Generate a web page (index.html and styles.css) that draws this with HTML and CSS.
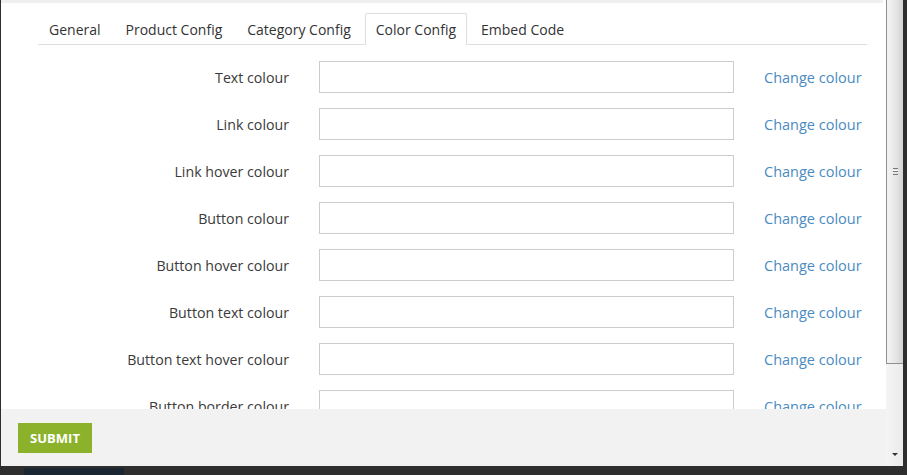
FILE: index.html
```html
<!DOCTYPE html>
<html>
<head>
<meta charset="utf-8">
<link rel="stylesheet" href="styles.css">
</head>
<body>
<div class="frame">
  <div class="modal">
    <div class="main">
      <div class="scroll">
        <div class="topstrip"></div>
        <div class="tabs">
          <div class="tab">General</div>
          <div class="tab">Product Config</div>
          <div class="tab">Category Config</div>
          <div class="tab active">Color Config</div>
          <div class="tab">Embed Code</div>
        </div>
        <div class="form">
          <label class="lbl">Text colour</label><div class="inp"></div><a class="chg">Change colour</a>
          <label class="lbl">Link colour</label><div class="inp"></div><a class="chg">Change colour</a>
          <label class="lbl">Link hover colour</label><div class="inp"></div><a class="chg">Change colour</a>
          <label class="lbl">Button colour</label><div class="inp"></div><a class="chg">Change colour</a>
          <label class="lbl">Button hover colour</label><div class="inp"></div><a class="chg">Change colour</a>
          <label class="lbl">Button text colour</label><div class="inp"></div><a class="chg">Change colour</a>
          <label class="lbl">Button text hover colour</label><div class="inp"></div><a class="chg">Change colour</a>
          <label class="lbl">Button border colour</label><div class="inp"></div><a class="chg">Change colour</a>
        </div>
      </div>
      <div class="footer">
        <button class="submit">SUBMIT</button>
      </div>
    </div>
    <div class="sbar">
      <div class="thumb"><div class="grip"></div></div>
      <div class="track"><div class="arrow"></div></div>
    </div>
  </div>
  <div class="under"><div class="navy"></div></div>
</div>
</body>
</html>
```
FILE: styles.css
```css
html, body {
  margin: 0;
  padding: 0;
  background: #2e2e2e;
  font-family: "Open Sans", "Noto Sans", sans-serif;
  font-size: 14.2px;
  color: #333;
}
.frame {
  width: 907px;
  height: 475px;
  overflow: hidden;
}
.modal {
  display: flex;
  width: 902px;
  height: 466px;
  margin-left: 1px;
  background: #fff;
}
.main {
  width: 885px;
  display: flex;
  flex-direction: column;
}
.scroll {
  height: 409px;
  overflow: hidden;
  background: #fff;
}
.topstrip {
  height: 3px;
  background: #efefef;
  margin-right: 3px;
}
.tabs {
  display: flex;
  margin: 10px 19px 0 37px;
  border-bottom: 1px solid #dedede;
  font-size: 14px;
}
.tab {
  padding: 6px 10px 4px;
  margin-right: 3px;
  border: 1px solid transparent;
  border-bottom: none;
  line-height: 20px;
  color: #333;
  border-radius: 2px 2px 0 0;
}
.active {
  border-color: #dedede;
  background: #fff;
  margin-bottom: -1px;
  padding-bottom: 5px;
}
.form {
  display: grid;
  grid-template-columns: 251px 415px auto;
  column-gap: 30px;
  row-gap: 15px;
  margin: 16px 0 0 37px;
  align-items: center;
}
.lbl {
  text-align: right;
  color: #3a3a3a;
}
.inp {
  height: 30px;
  border: 1px solid #cccccc;
  background: #fff;
}
.chg {
  color: #4a8bc2;
  font-size: 14.5px;
}
.footer {
  height: 57px;
  background: #f2f2f2;
  padding: 14px 0 0 17px;
  box-sizing: border-box;
}
.submit {
  height: 30px;
  width: 74px;
  border: none;
  background: #8cb22b;
  color: #fff;
  font-family: "Open Sans", "Noto Sans", sans-serif;
  font-weight: 700;
  font-size: 13px;
  padding: 0;
  border-radius: 0;
}
.sbar {
  width: 17px;
  display: flex;
  flex-direction: column;
  background: #f0f0f0;
}
.thumb {
  height: 364px;
  box-sizing: border-box;
  border-left: 1px solid #8f8f8f;
  border-bottom: 1px solid #8f8f8f;
  background: linear-gradient(to right, #f4f4f4, #e4e4e4 60%, #d2d2d2);
  display: flex;
  align-items: center;
  justify-content: center;
  padding-bottom: 20px;
}
.grip {
  width: 5px;
  height: 5px;
  border-top: 1px solid #777;
  border-bottom: 1px solid #777;
  background: linear-gradient(#fff 0 1px, #777 1px 2px, transparent 2px);
  background-position: 0 1px;
  background-size: 5px 3px;
  background-repeat: no-repeat;
}
.track {
  flex: 1;
  display: flex;
  flex-direction: column;
  justify-content: flex-end;
  align-items: center;
  padding-bottom: 10px;
  background: linear-gradient(to right, #f4f4f4, #ebebeb);
}
.arrow {
  width: 0;
  height: 0;
  border-left: 3px solid transparent;
  border-right: 3px solid transparent;
  border-top: 3px solid #333;
}
.under {
  height: 9px;
  display: flex;
  padding-left: 24px;
  align-items: flex-end;
}
.navy {
  width: 100px;
  height: 7px;
  background: #1b2633;
}
```
